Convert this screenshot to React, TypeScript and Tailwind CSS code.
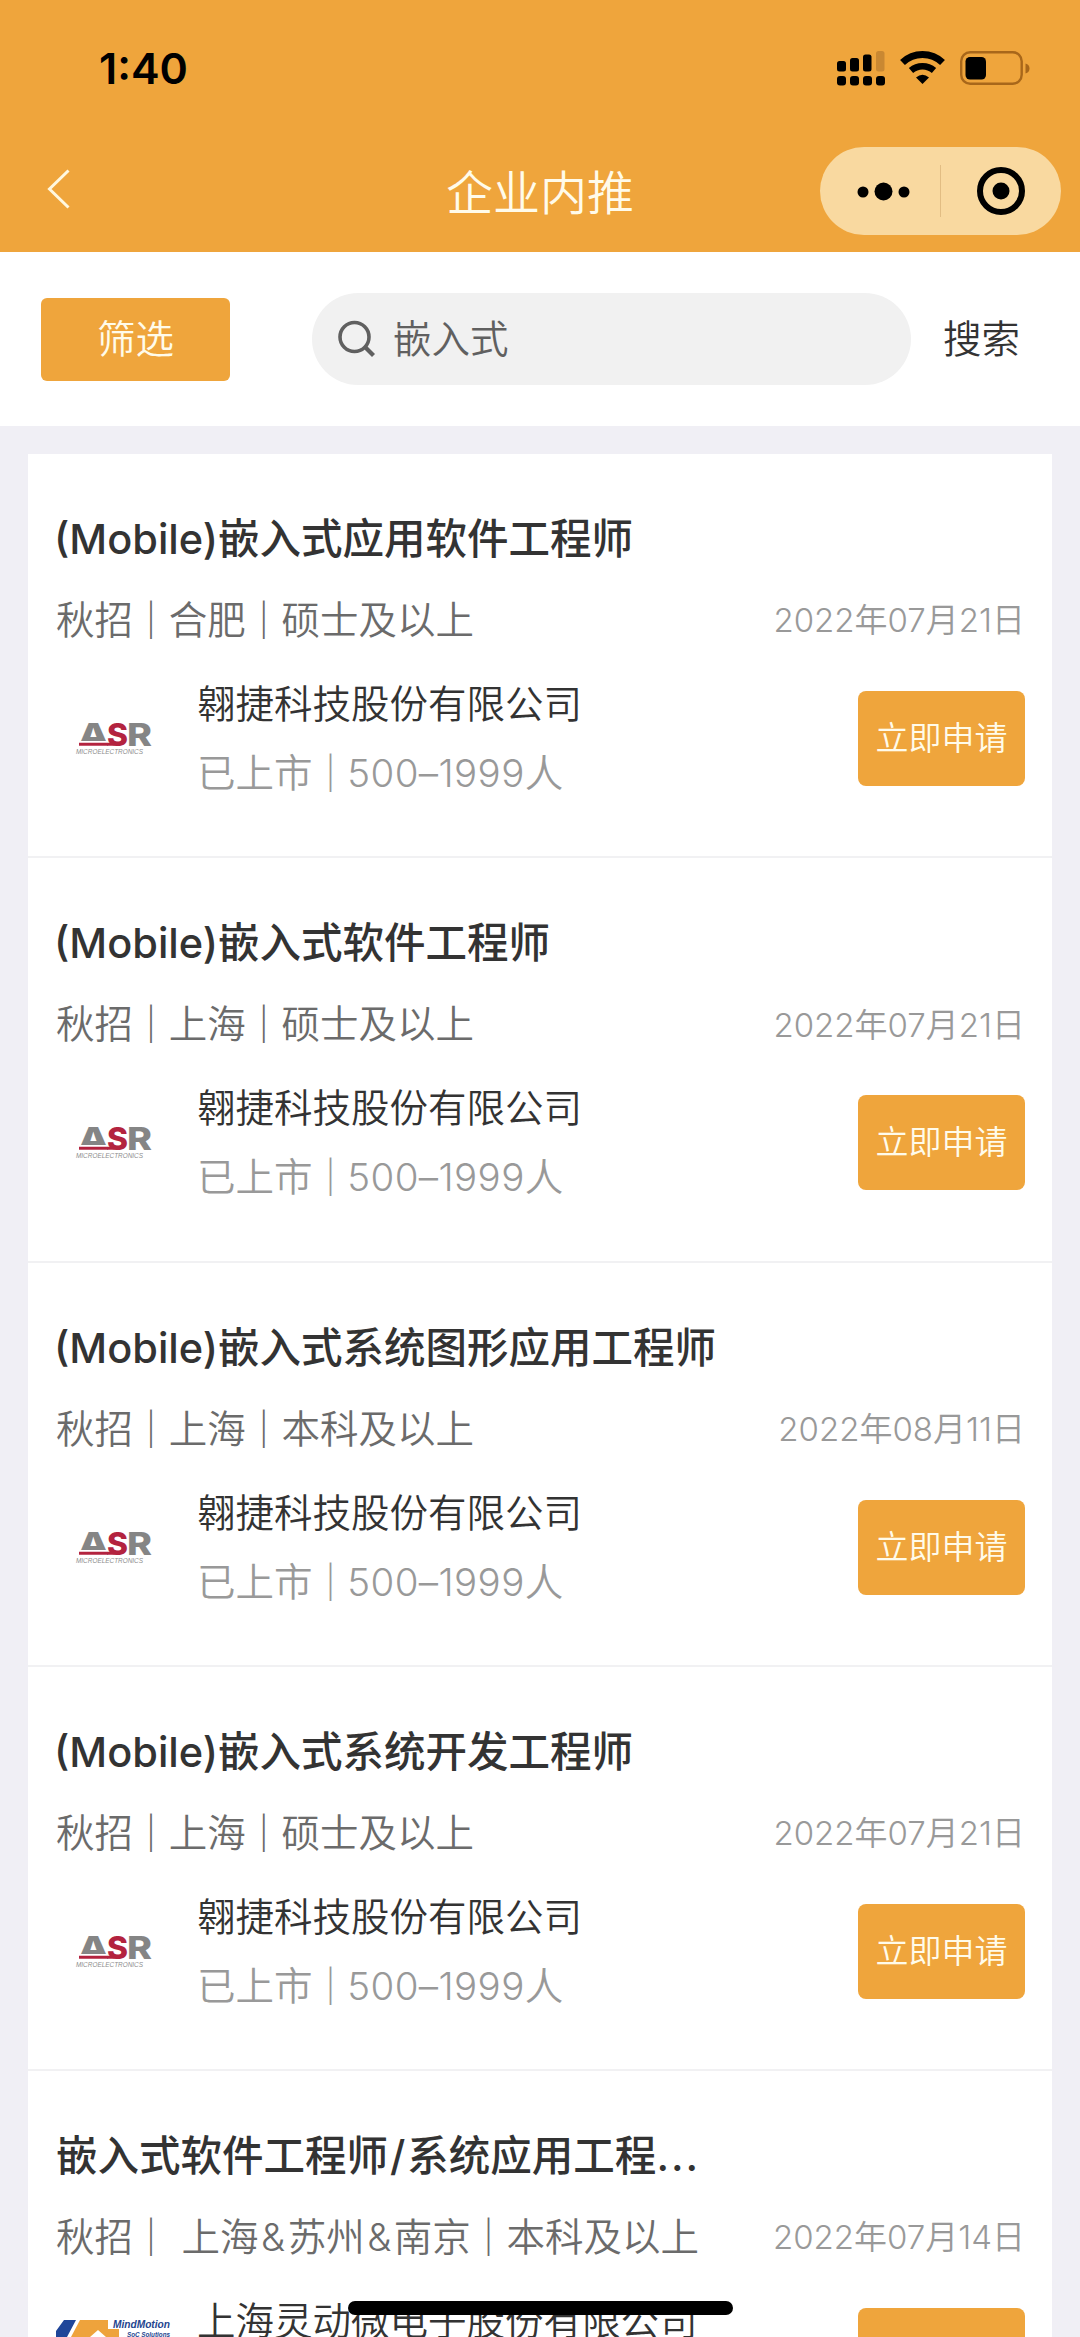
interface Job {
  title: string;
  tags: string;
  date: string;
  company: string;
  scale: string;
  logo: "asr" | "mindmotion";
}

const ASR = {
  company: "翱捷科技股份有限公司",
  scale: "已上市｜500–1999人",
  logo: "asr" as const,
};

const jobs: Job[] = [
  { ...ASR, title: "(Mobile)嵌入式应用软件工程师", tags: "秋招｜合肥｜硕士及以上", date: "2022年07月21日" },
  { ...ASR, title: "(Mobile)嵌入式软件工程师", tags: "秋招｜上海｜硕士及以上", date: "2022年07月21日" },
  { ...ASR, title: "(Mobile)嵌入式系统图形应用工程师", tags: "秋招｜上海｜本科及以上", date: "2022年08月11日" },
  { ...ASR, title: "(Mobile)嵌入式系统开发工程师", tags: "秋招｜上海｜硕士及以上", date: "2022年07月21日" },
  {
    title: "嵌入式软件工程师/系统应用工程...",
    tags: "秋招｜ 上海&苏州&南京｜本科及以上",
    date: "2022年07月14日",
    company: "上海灵动微电子股份有限公司",
    scale: "已上市｜100–499人",
    logo: "mindmotion",
  },
];

// spacing tweaks for the punctuation that sits between Chinese text
const SPACING: Record<string, string> = {
  "｜": "-mx-[1.4px] font-medium",
  " ": "mr-[2px]",
  "&": "mx-[2.500px]",
  "/": "mx-[2px]",
  "...": "tracking-[2px]",
  "(Mobile)": "-ml-[2px]",
  "500–1999": "-ml-[1px] tracking-[0.4px]",
};

function Spaced({ text }: { text: string }) {
  return (
    <>
      {text.split(/(｜| |&|\/|\.\.\.|\(Mobile\)|500–1999)/).map((part, i) =>
        SPACING[part] ? (
          <span key={i} className={SPACING[part]}>
            {part}
          </span>
        ) : (
          part
        ),
      )}
    </>
  );
}

function AsrLogo() {
  return (
    <svg className="h-[34px] w-[76px] overflow-visible" viewBox="0 0 76 34">
      <g fontFamily="Inter, sans-serif" fontWeight="800" fontSize="31">
        <text x="2" y="23.500" fill="#858585" textLength="31" lengthAdjust="spacingAndGlyphs">A</text>
        <path d="M0 19h31v5H0z" fill="#fff" />
        <text x="31" y="23.500" fill="#b3233f" textLength="21" lengthAdjust="spacingAndGlyphs">S</text>
        <text x="51" y="23.500" fill="#858585" textLength="25" lengthAdjust="spacingAndGlyphs">R</text>
      </g>
      <path d="M3 22.300h38" fill="none" stroke="#b3233f" strokeWidth="3" />
      <text x="0" y="31.500" fill="#8d8d8d" fontFamily="Liberation Sans, sans-serif" fontStyle="italic" fontSize="7" textLength="67" lengthAdjust="spacingAndGlyphs">
        MICROELECTRONICS
      </text>
    </svg>
  );
}

function MindMotionLogo() {
  return (
    <svg className="h-[72px] w-[115px] overflow-visible" viewBox="0 0 115 72">
      <path d="M0 60V11L8 0h12l-9 17v43z" fill="#1f4699" />
      <path d="M15 60V17L24 0h28v9h11v51H50V17l-8-7-8 7v43z" fill="#eea33c" />
      <g fill="#24458f" fontFamily="Liberation Sans, sans-serif" fontStyle="italic" fontWeight="700">
        <text x="57" y="8" fontSize="10.500" textLength="57" lengthAdjust="spacingAndGlyphs">MindMotion</text>
        <text x="71" y="16.500" fontSize="7" textLength="43" lengthAdjust="spacingAndGlyphs">SoC Solutions</text>
      </g>
    </svg>
  );
}

function StatusBar() {
  return (
    <div className="flex h-[136px] items-center justify-between pl-[99px] pr-[50px]">
      <span className="text-[43px] leading-none font-semibold text-black">1:40</span>
      <div className="flex items-center gap-[15px]">
        <svg className="h-9 w-12" viewBox="0 0 48 36">
          <rect x="0" y="11" width="9" height="10.5" rx="2.5" />
          <rect x="13" y="8" width="9" height="13.5" rx="2.5" />
          <rect x="26" y="4.500" width="8.500" height="17" rx="2.500" />
          <rect x="39" y="1" width="8.500" height="20.500" rx="2.500" fill="#c98832" />
          <rect x="0" y="26" width="9" height="9.500" rx="3" />
          <rect x="13" y="26" width="9" height="9.500" rx="3" />
          <rect x="26" y="26" width="9" height="9.500" rx="3" />
          <rect x="39" y="26" width="9" height="9.500" rx="3" />
        </svg>
        <svg className="h-9 w-[45px]" viewBox="0 0 45 36">
          <path d="M2.500 12.500a29 29 0 0 1 40 0" fill="none" stroke="#000" strokeWidth="7" />
          <path d="M11 20.500a17.500 17.500 0 0 1 23 0" fill="none" stroke="#000" strokeWidth="6.500" />
          <path d="M16 27.500Q22.500 22 29 27.500L22.500 34z" />
        </svg>
        <svg className="h-9 w-[70px]" viewBox="0 0 70 36">
          <rect x="1.200" y="2.200" width="60.500" height="31.500" rx="9" fill="none" stroke="#a8671a" strokeWidth="2.400" />
          <rect x="5.500" y="7" width="20.500" height="22.500" rx="4.500" />
          <path d="M65.500 13.500q4 1 4 5t-4 5z" fill="#a8671a" />
        </svg>
      </div>
    </div>
  );
}

function NavBar() {
  return (
    <div className="grid h-[109px] grid-cols-[1fr_auto_1fr] items-center px-[19px]">
      <svg className="mb-1 ml-7 h-10 w-6" viewBox="0 0 24 40" fill="none" stroke="#fff8e0" strokeWidth="3">
        <path d="M21.500 1.500 2.500 20l19 18.500" />
      </svg>
      <h1 className="pt-1 text-[47px] leading-none font-[350] text-[#fffbea]">企业内推</h1>
      <div className="flex h-[88px] w-[241px] items-center justify-self-end rounded-full bg-[#f9d9a0]">
        <svg className="h-[88px] w-[241px]" viewBox="0 0 241 88">
          <circle cx="43" cy="45" r="5.500" />
          <circle cx="63.500" cy="44.500" r="9" />
          <circle cx="84" cy="45" r="5.500" />
          <path d="M120.500 18v52" stroke="#e2bd83" />
          <circle cx="181" cy="44" r="21" fill="none" stroke="#000" strokeWidth="6" />
          <circle cx="181" cy="44" r="8.500" />
        </svg>
      </div>
    </div>
  );
}

function SearchBar() {
  return (
    <div className="flex h-[174px] items-center bg-white pl-[41px] text-[38.5px] leading-none font-[350]">
      <button className="h-[83px] w-[189px] rounded-md bg-[#efa53c] pt-px text-[#fffbea]">筛选</button>
      <div className="ml-[82px] flex h-[92px] w-[599px] items-center rounded-full bg-[#f1f1f1] pl-[26px] text-[#606060]">
        <svg className="h-[38px] w-[38px]" viewBox="0 0 38 38" fill="none" stroke="#606060" strokeWidth="3.600">
          <circle cx="16.500" cy="17" r="14.500" />
          <path d="m27 27 8.500 8.500" strokeWidth="4.200" />
        </svg>
        <span className="ml-[17px] pt-px">嵌入式</span>
      </div>
      <button className="ml-8 pt-px text-[#333]">搜索</button>
    </div>
  );
}

function JobCard({ job }: { job: Job }) {
  return (
    <li className="h-[404.25px] border-b-2 border-[#f1f1f3] pt-[55px] pr-[27px] pl-7">
      <h2 className="h-[60px] text-[41.5px] leading-[60px] font-medium whitespace-pre text-[#333]">
        <Spaced text={job.title} />
      </h2>
      <div className="mt-[22px] flex h-[60px] items-center justify-between font-[350]">
        <span className="text-[38.5px] whitespace-pre text-[#6b6b6b]">
          <Spaced text={job.tags} />
        </span>
        <span className="text-[33px] text-[#999]">{job.date}</span>
      </div>
      <div className="mt-[22px] flex">
        <div className="flex h-[115px] w-[115px] shrink-0 items-center justify-center pt-[17px]">
          {job.logo === "asr" ? <AsrLogo /> : <MindMotionLogo />}
        </div>
        <div className="ml-[26px] flex-1 text-[38.5px] font-[350] whitespace-nowrap">
          <p className="mt-px h-[60px] leading-[60px] text-[#333]">{job.company}</p>
          <p className="mt-[9px] h-[60px] leading-[60px] text-[#999]">
            <Spaced text={job.scale} />
          </p>
        </div>
        <button className="mt-[18px] h-[95px] w-[167px] shrink-0 rounded-lg bg-[#efa53c] text-[33px] leading-none font-[350] text-[#fffbea]">
          立即申请
        </button>
      </div>
    </li>
  );
}

export default function App() {
  return (
    <div className="relative h-[2337px] w-[1080px] overflow-hidden bg-[#f0eff5] font-['Inter','Noto_Sans_CJK_SC',sans-serif]">
      <header className="h-[252px] bg-[#efa53c]">
        <StatusBar />
        <NavBar />
      </header>
      <SearchBar />
      <ul className="mx-7 mt-7 bg-white">
        {jobs.map((job) => (
          <JobCard key={job.title} job={job} />
        ))}
      </ul>
      <div className="absolute bottom-[22px] left-[348px] h-[14px] w-[385px] rounded-full bg-black" />
    </div>
  );
}
